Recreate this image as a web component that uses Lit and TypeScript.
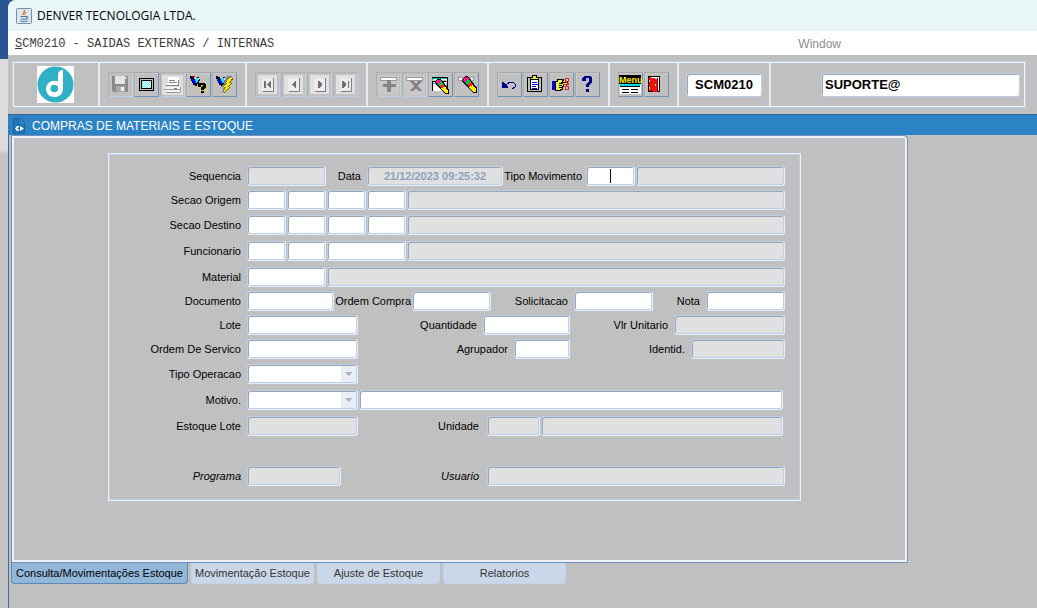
import { LitElement, html, svg, css } from "lit";
import { customElement } from "lit/decorators.js";
import { classMap } from "lit/directives/class-map.js";

const sheet = (glyph: unknown) => svg`
  <rect x="3" y="3" width="19" height="19" fill="#e0e0e0"/>
  <path d="M7 6h11v13h-11z" fill="#ececec"/>
  <path d="M18.500 6v13.500h-11" fill="none" stroke="#808080"/>
  <g fill="#707070">${glyph}</g>`;

const pencil = svg`
  <path d="M8 7l3-3h3l9 12v5h-4l-11-12z" fill="#000"/>
  <path d="M9 7l2-2h3l1 2-4 3-2-1z" fill="#f0b"/>
  <path d="M10 6h2v2h-2z" fill="#f33"/>
  <path d="M11 10l4-3 2 3-4 3z" fill="#0c3"/>
  <path d="M13 13l4-3 2 3-4 2z" fill="#f22"/>
  <path d="M15 15l4-2 3 4v3h-3z" fill="#fe0"/>`;

const flashlight = svg`
  <path d="M4 4h2v1h2v2h2v-1h1v-1h2v2h1v2h-1v3h-2v2h-2v-1h-2v-2h-1v-2h-1v-2h-1z" fill="#000"/>
  <path d="M5 6h2v2h1v3h-1v-1h-1v-2h-1z" fill="#00d"/>
  <path d="M8 8h2v4h-2z" fill="#00f"/>
  <path d="M10 6h2v4h-1v1h-1v-2h-1v-2h1z" fill="#0ef"/>
  <path d="M12 6h1v2h-1z" fill="#fff"/>`;

const ICONS: Record<string, unknown> = {
  save: svg`
    <path d="M4 4h16v16h-15l-1-1z" fill="#8a8a8a"/>
    <path d="M7 4h10v8h-10z" fill="#e4e4e4"/>
    <path d="M17 5h2v2h-2z" fill="#d0d0d0"/>
    <path d="M8 14h9v6h-9z" fill="#aaa"/>
    <path d="M13 15h3v4h-3z" fill="#eee"/>`,
  screen: svg`
    <rect x="5.500" y="6.500" width="14" height="12" rx="1" fill="#c0c0c0" stroke="#000"/>
    <rect x="7.500" y="8.500" width="10" height="8" fill="#8df2f4" stroke="#000"/>
    <path d="M9 9.500h8M10 10.500h7M9 11.500h8M10 12.500h7M9 13.500h8M10 14.500h7M9 15.500h8" fill="none" stroke="#dcfbfb" stroke-dasharray="1 1"/>`,
  print: svg`
    <rect x="2" y="3" width="21" height="20" fill="#dedede"/>
    <path d="M8 5h9l2 2v7h-12v-2h1z" fill="#fff"/>
    <path d="M9 8.500h6M9 10.500h8M6 13.500h13M18.500 8v6" stroke="#808080" fill="none"/>
    <path d="M5 15h15v5h-15z" fill="#f4f4f4"/>
    <path d="M4 17.500h16M20.500 15v5M6 20.500h14" stroke="#999" fill="none"/>
    <path d="M14 16h3v1h-3z" fill="#777"/>`,
  query: svg`
    <path d="M12 13.500h9M12 15.500h9M12 17.500h9M12 19.500h9" stroke="#fe0" stroke-dasharray="1 1"/>
    ${flashlight}
    <path d="M6 4h3v1h-3z" fill="#e00"/>
    <path d="M12 12h1v-1h6v1h1v4h-1v1h-1v1h-3v-3h1v-1h1v-1h-2v2h-3zM15 19h3v2h-3z" fill="#000"/>`,
  run: svg`
    ${flashlight}
    <path d="M15 4h5l-3 4h3l-4 5h2l-8 8 2-6h-3l3-4h-1z" fill="#808080"/>
    <path d="M17 6h4l-4 5h3l-4 4h2l-7 6 3-6h-3l4-4h-1z" fill="#fe0"/>
    <path d="M21 6l-3 5M20 11l-4 4M18 15l-6 6" fill="none" stroke="#660"/>`,
  first: sheet(svg`<path d="M9 9h2v7h-2zM16 9v7h-1l-3-3v-1l3-3z"/>`),
  prev: sheet(svg`<path d="M15 9v7h-1l-3-3v-1l3-3z"/>`),
  next: sheet(svg`<path d="M11 9v7h1l3-3v-1l-3-3z"/>`),
  last: sheet(svg`<path d="M15 9h1v7h-1zM9 9v7h1l3-3v-1l-3-3z"/>`),
  add: svg`
    <rect x="2" y="3" width="21" height="20" fill="#c8c8c8"/>
    <path d="M4.500 5.500h16v3h-16z" fill="#fff" stroke="#999"/>
    <path d="M11 8h4v4h5v3h-5v5h-4v-5h-4v-3h4z" fill="#858585"/>`,
  remove: svg`
    <rect x="2" y="3" width="21" height="20" fill="#c8c8c8"/>
    <path d="M4.500 5.500h16v3h-16z" fill="#fff" stroke="#999"/>
    <path d="M8 9h4l2 3 2-3h4l-4 5 4 5h-4l-2-3-2 3h-4l4-5z" fill="#858585"/>`,
  clearForm: svg`
    <path d="M4 5h15v3h-15z" fill="#0aa"/>
    <path d="M4 5.500h15.500v12" stroke="#000" fill="none"/>
    <path d="M5 7h14v1h-14z" fill="#fff"/>
    <path d="M4 9h14v10h-14z" fill="#fff"/>
    <path d="M4.500 19v-9.500h13" stroke="#000" fill="none"/>
    <path d="M5 11h12v1h-12z" fill="#0aa"/>
    <g transform="translate(0 3) scale(.9)">${pencil}</g>`,
  clear: svg`<path d="M4.500 5.500h15v3h-15z" fill="#fff" stroke="#999"/>${pencil}`,
  undo: svg`
    <path d="M9 13l4-3h3l2 2v3l-3 2" fill="none" stroke="#000088"/>
    <path d="M5 10h1l5 5v1h-6z" fill="#000088"/>`,
  list: svg`
    <rect x="4.500" y="5.500" width="14" height="14" rx="1" fill="#c0c0c0" stroke="#000"/>
    <path d="M7.500 7.500h8v10h-8z" fill="#fff" stroke="#000"/>
    <path d="M7.500 7.500v-2h2v-2h4v2h2v2z" fill="#ee2" stroke="#000"/>
    <path d="M9 10.500h5M9 12.500h6M9 14.500h4M9 16.500h5" stroke="#00c"/>`,
  cut: svg`
    <path d="M3 9h3v9h-3z" fill="#00d"/>
    <path d="M6 9h2v-2h7l-2 3h5v2h-4v2h-1v3h-2v1h-5z" fill="#ee4" stroke="#000"/>
    <path d="M10 11h4M10 13h3M10 15h3" stroke="#000"/>
    <path d="M14 12h3M17 10l3 3M17 14l3-3" stroke="#e22"/>
    <circle cx="18" cy="8" r="2" fill="none" stroke="#e22"/>
    <circle cx="18" cy="16" r="2" fill="none" stroke="#e22"/>`,
  help: svg`<path d="M7 6l2-2h6l2 2v4l-3 3v2h-3v-3l3-3v-3h-3v3h-4zM11 17h3v3h-3z" fill="#000088"/>`,
  menu: svg`
    <path d="M2 12h21v10h-21z" fill="#fff"/>
    <path d="M1 3h22v9h-22z" fill="#000"/>
    <text x="1" y="11" fill="#fe0" font-family="Liberation Sans, Arial, sans-serif" font-size="9" font-weight="bold">Menu</text>
    <path d="M2 12h20v2h-20z" fill="#0dd"/>
    <path d="M2 14.500h20M4 17.500h7M4 20.500h7M13 17.500h7M13 20.500h7" stroke="#000"/>`,
  exit: svg`
    <path d="M4.500 4.500h11v15h-11z" fill="#fff" stroke="#000"/>
    <path d="M5 5l8 2v13l-8-1z" fill="#e11"/>
    <path d="M13.500 6v14" stroke="#800"/>
    <path d="M5 8h1v2h-1zM5 15h1v2h-1zM11 12h1v2h-1z" fill="#fe0"/>`,
};

interface Tool { icon: string; label: string; off?: boolean }

const GROUPS: Tool[][] = [
  [
    { icon: "save", label: "Salvar", off: true },
    { icon: "screen", label: "Tela" },
    { icon: "print", label: "Imprimir", off: true },
    { icon: "query", label: "Consultar" },
    { icon: "run", label: "Executar consulta" },
  ],
  [
    { icon: "first", label: "Primeiro", off: true },
    { icon: "prev", label: "Anterior", off: true },
    { icon: "next", label: "Seguinte", off: true },
    { icon: "last", label: "Ultimo", off: true },
  ],
  [
    { icon: "add", label: "Inserir", off: true },
    { icon: "remove", label: "Remover", off: true },
    { icon: "clearForm", label: "Limpar tela" },
    { icon: "clear", label: "Limpar registro" },
  ],
  [
    { icon: "undo", label: "Desfazer" },
    { icon: "list", label: "Lista" },
    { icon: "cut", label: "Cortar" },
    { icon: "help", label: "Ajuda" },
  ],
  [
    { icon: "menu", label: "Menu" },
    { icon: "exit", label: "Sair" },
  ],
];

const TABS = ["Consulta/Movimentações Estoque", "Movimentação Estoque", "Ajuste de Estoque", "Relatorios"];

@customElement("app-toolbar")
class AppToolbar extends LitElement {
  static styles = css`
    :host { display: block; padding: 6px 11px 6px 4px; }
    * { box-sizing: border-box; }
    .bar { display: flex; height: 47px; border: 1px solid #bccfe6; outline: 1px solid #eef3fa; outline-offset: -2px; }
    .cell { display: flex; flex: none; align-items: center; padding: 0 7px; border-right: 2px solid #e3ecf7; }
    .cell:last-child { border-right: 0; }
    .brand { width: 87px; justify-content: center; }
    .tools { gap: 1px; padding: 0 8px; }
    button { width: 25px; height: 25px; padding: 0; border: 0; background: #c0c0c0; box-shadow: inset 1px 1px #a8a8a8, inset -1px -1px #6f92b8, inset 2px 2px #cacaca; }
    button:disabled { box-shadow: inset 1px 1px #b0b0b0, inset -1px -1px #bcd0e8; }
    svg { display: block; }
    input { height: 24px; padding: 0 3px; border: 1px solid #bccfe6; border-radius: 3px; box-shadow: inset 1px 1px #9aa4b4; background: #fff; color: #000; font: bold 13px "Liberation Sans", Arial, sans-serif; }
    .code-cell { width: 92px; }
    .code { width: 76px; text-align: center; }
    .bar .user-cell { flex: 1; justify-content: flex-end; padding: 0 5px 0 50px; min-width: 0; }
    .user { flex: 1; max-width: 201px; min-width: 0; }
  `;

  render() {
    return html`<div class="bar" role="toolbar">
      <div class="cell brand">
        <svg width="37" height="37" viewBox="0 0 37 37" role="img" aria-label="Denver">
          <rect width="37" height="37" fill="#fff"/>
          <circle cx="18.500" cy="18.500" r="18" fill="#30b0c4"/>
          <path d="M26 4c-3 0-5 2-5 5v6.200c-6-2-12 1.800-12 7.300 0 5 3.500 8.500 8.500 8.500 5 0 8.500-3.300 8.500-8.500z" fill="#fff"/>
          <circle cx="17.300" cy="22.500" r="3.800" fill="#30b0c4"/>
        </svg>
      </div>
      ${GROUPS.map((group) => html`<div class="cell tools">
        ${group.map((tool) => html`<button type="button" ?disabled=${!!tool.off} title=${tool.label} aria-label=${tool.label}>
          <svg width="25" height="25" viewBox="0 0 25 25" shape-rendering="crispEdges" aria-hidden="true">${ICONS[tool.icon]}</svg>
        </button>`)}
      </div>`)}
      <div class="cell code-cell"><input class="code" aria-label="Programa atual" value="SCM0210"></div>
      <div class="cell user-cell"><input class="user" aria-label="Conectado como" value="SUPORTE@"></div>
    </div>`;
  }
}

@customElement("movement-form")
class MovementForm extends LitElement {
  static styles = css`
    :host { display: block; }
    * { box-sizing: border-box; }
    form { border: 1px solid #e9f1fa; box-shadow: inset 1px 1px #bccfe6, inset -1px -1px #bccfe6; padding: 12px 15px 14px 0; font: 11px "Liberation Sans", Arial, sans-serif; color: #000; }
    .row { display: flex; gap: 1px; height: 20px; margin-bottom: 4px; }
    .mid { margin-bottom: 5px; }
    .wide { margin-bottom: 6px; }
    .break { margin-bottom: 30px; }
    .last { margin-bottom: 0; }
    label { flex: none; line-height: 20px; padding-right: 5px; text-align: right; white-space: nowrap; }
    .lead { width: 137px; }
    .push { flex: 1; }
    .data { width: 39px; }
    .tipo { width: 81px; padding-right: 3px; }
    .compra { width: 76px; padding-right: 0; }
    .nota { width: 51px; }
    .vlr { width: 102px; }
    .ident { width: 119px; }
    .unidade { width: 127px; padding-right: 7px; }
    .usuario { width: 144px; padding-right: 7px; }
    .it { font-style: italic; }
    input, select { height: 20px; min-width: 0; margin: 0; padding: 0 2px; border: 1px solid #bccfe6; border-right-color: #e6eff9; border-bottom-color: #e6eff9; border-radius: 3px; background: #fff; box-shadow: inset 1px 1px #9aa5b6, inset -1px -1px #bccfe6; font: bold 11px "Liberation Sans", Arial, sans-serif; outline: 0; }
    input[readonly] { background: #e0e0e0; color: #8ba3bd; text-align: center; }
    .w39 { width: 39px; }
    .w49 { width: 49px; }
    .w53 { width: 53px; }
    .w56 { width: 56px; }
    .w79 { width: 79px; }
    .w87 { width: 87px; }
    .w94 { width: 94px; }
    .w111 { width: 111px; }
    .w136 { width: 136px; }
    .grow { flex: 1; }
    .short { margin-right: 2px; }
    .caret { background: linear-gradient(#000, #000) 50% 50% / 1px 14px no-repeat #fff; }
    select { appearance: none; color: #000; }
    .combo { display: grid; width: 111px; }
    .combo > * { grid-area: 1 / 1; }
    .arrow { justify-self: end; align-self: center; width: 15px; height: 16px; margin-right: 2px; display: block; pointer-events: none; }
  `;

  private combo(id: string) {
    return html`<span class="combo">
      <select id=${id}><option></option></select>
      <svg class="arrow" viewBox="0 0 15 16" aria-hidden="true"><path d="M0 0h15v16h-15z" fill="#e9edf5"/><path d="M4 6h7.500l-3.700 4z" fill="#adb1b8"/></svg>
    </span>`;
  }

  private section(id: string, text: string) {
    return html`<label class="lead" for=${id}>${text}</label>
      <input class="w39" id=${id}>
      ${[2, 3, 4].map((n) => html`<input class="w39" aria-label="${text} ${n}">`)}
      <input class="grow" readonly aria-label="${text} descricao">`;
  }

  render() {
    return html`<form @submit=${(e: Event) => e.preventDefault()}>
      <div class="row">
        <label class="lead" for="seq">Sequencia</label><input class="w79" id="seq" readonly>
        <label class="data" for="data">Data</label><input class="w136" id="data" readonly value="21/12/2023 09:25:32">
        <label class="tipo" for="tipo">Tipo Movimento</label><input class="w49 caret" id="tipo">
        <input class="grow" readonly aria-label="Tipo Movimento descricao">
      </div>
      <div class="row mid">${this.section("origem", "Secao Origem")}</div>
      <div class="row wide">${this.section("destino", "Secao Destino")}</div>
      <div class="row wide">
        <label class="lead" for="func">Funcionario</label><input class="w39" id="func">
        <input class="w39" aria-label="Funcionario 2"><input class="w79" aria-label="Funcionario 3">
        <input class="grow" readonly aria-label="Funcionario nome">
      </div>
      <div class="row">
        <label class="lead" for="mat">Material</label><input class="w79" id="mat">
        <input class="grow" readonly aria-label="Material descricao">
      </div>
      <div class="row">
        <label class="lead" for="doc">Documento</label><input class="w87" id="doc">
        <label class="compra" for="oc">Ordem Compra</label><input class="w79" id="oc">
        <label class="push" for="sol">Solicitacao</label><input class="w79" id="sol">
        <label class="nota" for="nota">Nota</label><input class="w79" id="nota">
      </div>
      <div class="row">
        <label class="lead" for="lote">Lote</label><input class="w111" id="lote">
        <label class="push" for="qtd">Quantidade</label><input class="w87" id="qtd">
        <label class="vlr" for="vlr">Vlr Unitario</label><input class="w111" id="vlr" readonly>
      </div>
      <div class="row mid">
        <label class="lead" for="os">Ordem De Servico</label><input class="w111" id="os">
        <label class="push" for="agr">Agrupador</label><input class="w56" id="agr">
        <label class="ident" for="ident">Identid.</label><input class="w94" id="ident" readonly>
      </div>
      <div class="row wide"><label class="lead" for="oper">Tipo Operacao</label>${this.combo("oper")}</div>
      <div class="row wide">
        <label class="lead" for="motivo">Motivo.</label>${this.combo("motivo")}
        <input class="grow short" aria-label="Motivo descricao">
      </div>
      <div class="row break">
        <label class="lead" for="est">Estoque Lote</label><input class="w111" id="est" readonly>
        <label class="unidade" for="uni">Unidade</label><input class="w53" id="uni" readonly>
        <input class="grow short" readonly aria-label="Unidade descricao">
      </div>
      <div class="row last">
        <label class="lead it" for="prog">Programa</label><input class="w94" id="prog" readonly>
        <label class="usuario it" for="usu">Usuario</label><input class="grow" id="usu" readonly>
      </div>
    </form>`;
  }
}

@customElement("app-root")
class AppRoot extends LitElement {
  static styles = css`
    :host { display: block; font-family: "Liberation Sans", Arial, sans-serif; }
    * { box-sizing: border-box; }
    .desk { min-height: 100vh; padding-left: 8px; background: linear-gradient(#2b5592 0 59px, #dcdcdc 59px 150px, #c4c4c4 154px); }
    .window { min-height: 100vh; display: flex; flex-direction: column; background: #c0c0c0; border-radius: 8px 0 0 0; overflow: hidden; }
    .title { display: flex; align-items: center; gap: 5px; height: 31px; padding-left: 8px; background: #e8f6f8; color: #000; }
    h1 { margin: 0; font: 12px "Open Sans", "Noto Sans", sans-serif; }
    .menu { display: flex; align-items: center; height: 24px; padding: 2px 196px 0 7px; background: #fff; justify-content: space-between; }
    .menu a { color: #3c3c3c; text-decoration: none; font: 12px "Liberation Mono", "Courier New", monospace; }
    .menu a.dim { color: #8c8c8c; font: 12px "Liberation Sans", Arial, sans-serif; }
    .head { display: flex; align-items: center; gap: 7px; height: 21px; padding: 2px 0 0 5px; border-top: 1px solid #41618f; background: #2b83c5; color: #fff; }
    h2 { margin: 0; font: 12px "Liberation Sans", Arial, sans-serif; }
    .body { flex: 1; border-left: 1px solid #456a9c; padding: 1px 130px 20px 3px; }
    .panel { border: 2px solid #eef2f8; outline: 1px solid #6f92b8; border-radius: 0 3px 0 0; padding: 15px 104px 59px 94px; }
    .tabs { display: flex; gap: 3px; margin-left: -1px; }
    .tabs button { width: 123px; height: 22px; padding: 0; border: 1px solid #c3d3ea; border-top: 0; border-radius: 0 0 4px 4px; background: #cad7e9; color: #333; font: 11px "Liberation Sans", Arial, sans-serif; white-space: nowrap; }
    .tabs .on { width: 177px; background: #92b7d9; border-color: #5f86b0; color: #000; }
  `;

  render() {
    return html`<div class="desk"><main class="window">
      <header class="title">
        <svg width="16" height="16" viewBox="0 0 16 16" aria-hidden="true">
          <rect x=".5" y=".5" width="15" height="15" rx="1" fill="#dbe7f0" stroke="#7c8fa3"/>
          <path d="M8.500 2c1 2-2.500 2.500-1 5M10 4c-1.500 1-1.500 1.500-.8 2.800" fill="none" stroke="#ea6a2a" stroke-width="1.300"/>
          <path d="M4.500 8.500h6.500v2.200q-3 1.500-6 0M11 8.800q2 0 0 1.800M4 13q4 1.300 8-.3" fill="none" stroke="#4d7a9e"/>
        </svg>
        <h1>DENVER TECNOLOGIA LTDA.</h1>
      </header>
      <nav class="menu">
        <a href="#programa"><u>S</u>CM0210 - SAIDAS EXTERNAS / INTERNAS</a>
        <a class="dim" href="#window">Window</a>
      </nav>
      <app-toolbar></app-toolbar>
      <div class="head">
        <svg width="12" height="16" viewBox="0 0 12 16" aria-hidden="true">
          <path d="M.5 .5h7l4 4v11h-11z" fill="#2374b4" stroke="#1c639c"/>
          <path d="M8 1v4h3" fill="none" stroke="#3e94d2"/>
          <path d="M6 8h-2l-2 2.500 2 2.500h2v-1.500h-1.500v-2h1.500zM7 8l4 2.500-4 2.500z" fill="#fff"/>
        </svg>
        <h2>COMPRAS DE MATERIAIS E ESTOQUE</h2>
      </div>
      <div class="body">
        <section class="panel"><movement-form></movement-form></section>
        <div class="tabs" role="tablist">
          ${TABS.map((tab, i) => html`<button type="button" role="tab" aria-selected=${i === 0} class=${classMap({ on: i === 0 })}>${tab}</button>`)}
        </div>
      </div>
    </main></div>`;
  }
}
